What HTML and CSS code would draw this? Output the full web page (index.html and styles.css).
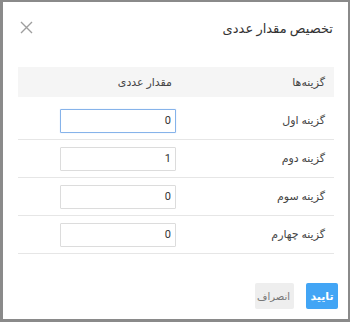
FILE: index.html
```html
<!doctype html>
<html lang="fa" dir="rtl">
  <head>
    <meta charset="UTF-8" />
    <meta name="viewport" content="width=device-width, initial-scale=1.0" />
    <title>تخصیص مقدار عددی</title>
    <link rel="stylesheet" href="styles.css">
  </head>
  <body>
    <div class="modal">
      <div class="modal-header">
        <h2 class="modal-title">تخصیص مقدار عددی</h2>
        <button class="close-btn" aria-label="close">
          <svg width="13" height="13" viewBox="0 0 13 13">
            <path d="M1 1 L12 12 M12 1 L1 12" stroke="#9e9e9e" stroke-width="1.4" fill="none" />
          </svg>
        </button>
      </div>

      <div class="options">
        <div class="options-head">
          <span class="col-label">گزینه‌ها</span>
          <span class="col-value">مقدار عددی</span>
        </div>
        <div class="option-row">
          <span class="col-label">گزینه اول</span>
          <span class="col-value"><input class="num-input focused" type="text" value="0" /></span>
        </div>
        <div class="option-row">
          <span class="col-label">گزینه دوم</span>
          <span class="col-value"><input class="num-input" type="text" value="1" /></span>
        </div>
        <div class="option-row">
          <span class="col-label">گزینه سوم</span>
          <span class="col-value"><input class="num-input" type="text" value="0" /></span>
        </div>
        <div class="option-row">
          <span class="col-label">گزینه چهارم</span>
          <span class="col-value"><input class="num-input" type="text" value="0" /></span>
        </div>
      </div>

      <div class="modal-footer">
        <button class="btn btn-primary">تایید</button>
        <button class="btn btn-cancel">انصراف</button>
      </div>
    </div>
  </body>
</html>
```

FILE: styles.css
```css
* {
  margin: 0;
  padding: 0;
  box-sizing: border-box;
}

html, body {
  height: 100%;
}

body {
  font-family: Roboto, "DejaVu Sans", sans-serif;
  background: #8a8a8a;
  padding: 2px 2px 3px 3px;
}

.modal {
  background: #fff;
  height: 100%;
  display: flex;
  flex-direction: column;
}

.modal-header {
  height: 50px;
  display: flex;
  align-items: center;
  justify-content: space-between;
  padding: 0 15px 0 16px;
}

.modal-title {
  font-size: 13px;
  font-weight: 400;
  color: #333;
  padding-top: 2px;
}

.close-btn {
  background: none;
  border: none;
  width: 13px;
  height: 13px;
  display: flex;
  align-items: center;
  justify-content: center;
  margin-left: 1px;
}

.options {
  margin: 15px 14px 0 15px;
}

.options-head {
  height: 30px;
  background: #f5f5f5;
  display: flex;
  align-items: center;
  margin-bottom: 5px;
  font-size: 11px;
  color: #444;
}

.options-head .col-value {
  padding-right: 12px;
}

.option-row {
  height: 38px;
  display: flex;
  align-items: center;
  border-bottom: 1px solid #e6e6e6;
  font-size: 11px;
  color: #444;
}

.col-label {
  width: 150px;
  padding-right: 9px;
}

.col-value {
  padding-right: 8px;
  display: flex;
}

.num-input {
  width: 116px;
  height: 24px;
  border: 1px solid #dcdcdc;
  border-radius: 1px;
  font-family: Roboto, sans-serif;
  font-size: 11px;
  color: #333;
  text-align: right;
  padding: 0 4px;
  direction: rtl;
  outline: none;
}

.num-input.focused {
  border-color: #86b3ea;
  box-shadow: 0 0 1px rgba(66, 133, 244, 0.4);
}

.modal-footer {
  margin-top: auto;
  display: flex;
  gap: 12px;
  padding: 0 10px 10px;
}

.btn {
  height: 26px;
  border: none;
  border-radius: 2px;
  font-family: "DejaVu Sans", sans-serif;
  font-size: 10px;
  padding: 0 4px;
}

.btn-primary {
  background: #42a5f5;
  color: #fff;
  font-weight: 700;
  font-size: 11px;
  width: 32px;
}

.btn-cancel {
  background: #eeeeee;
  color: #777;
  width: 39px;
}
```
